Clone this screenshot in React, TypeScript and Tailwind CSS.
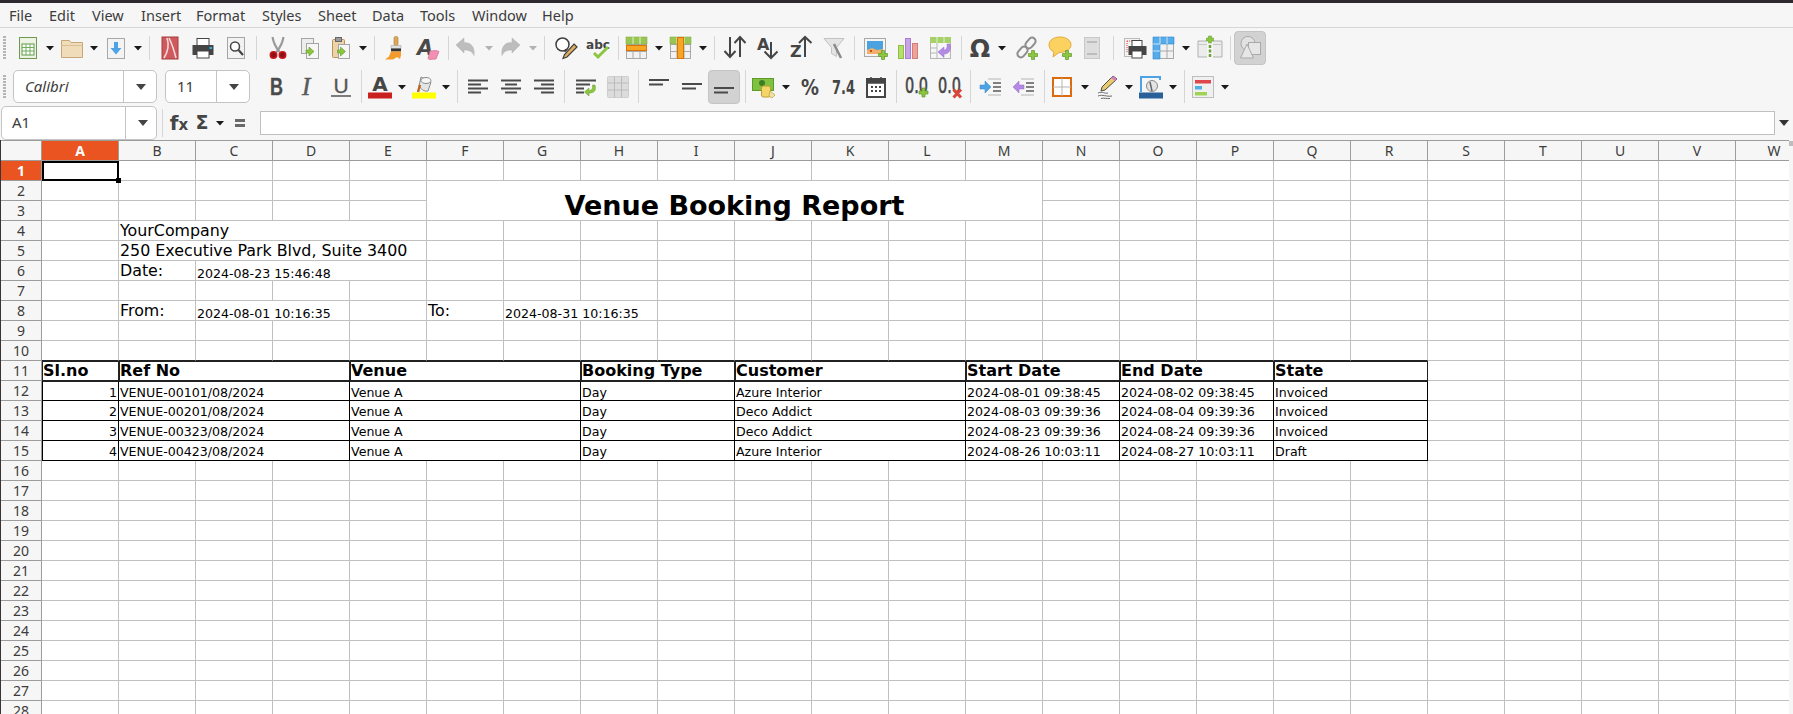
import React from 'react';
import clsx from 'clsx';

type IcoProps = { className?: string };

const Ico: React.FC<IcoProps & { children: React.ReactNode }> = ({ className, children }) => (
  <svg width="24" height="24" viewBox="0 0 24 24" className={clsx('shrink-0 overflow-visible', className)}>{children}</svg>
);

const Arr: React.FC<IcoProps> = ({ className }) => (
  <svg width="8" height="5" viewBox="0 0 8 5" className={clsx('shrink-0 mt-[1px]', className)}><path d="M0 0h8L4 4.5z" fill="#1a1a1a" /></svg>
);

const Sep: React.FC<IcoProps> = ({ className }) => <div className={clsx('w-px shrink-0 bg-[#d6d6d6]', className)} />;

const Grip: React.FC<IcoProps> = ({ className }) => (
  <div className={clsx('ml-[3px] w-[3px] shrink-0 bg-[repeating-linear-gradient(to_bottom,#b5b5b5_0,#b5b5b5_2px,transparent_2px,transparent_3px)]', className)} />
);

const Plus: React.FC<{ x: number; y: number }> = ({ x, y }) => (
  <path transform={`translate(${x} ${y})`} d="M3 0h3v3h3v3H6v3H3V6H0V3h3z" fill="#8cc63f" stroke="#5e9a2a" strokeWidth=".7" />
);

const GreenArrow: React.FC<{ x: number; y: number }> = ({ x, y }) => (
  <path transform={`translate(${x} ${y})`} d="M0 3h3V0l5 4.5L3 9V6H0z" fill="#8cc63f" stroke="#5e9a2a" strokeWidth=".6" />
);

const GridBase: React.FC = () => (
  <>
    <rect x="1.5" y="1.5" width="20" height="21" fill="#f2f2f2" stroke="#a9a9a9" />
    <path d="M8 1.5v21M15 1.5v21M1.5 8.5h20M1.5 15.5h20" stroke="#a9a9a9" fill="none" />
  </>
);

const NewSheet = (p: IcoProps) => (
  <Ico {...p}>
    <rect x="3.5" y="1.5" width="17" height="21" fill="#eef3e6" stroke="#6c9a52" />
    <rect x="6" y="8" width="12" height="11" fill="#fff" stroke="#5c9a46" />
    <path d="M6 11.5h12M6 15h12M10 8v11M14 8v11" stroke="#6fae58" />
  </Ico>
);
const Folder = (p: IcoProps) => (
  <Ico {...p}>
    <path d="M1.5 21.5v-17h8l1.5 2h11.5v15z" fill="#f0dcb8" stroke="#c7a678" />
    <path d="M1.5 9.5h21" stroke="#d9bf94" fill="none" />
  </Ico>
);
const Save = (p: IcoProps) => (
  <Ico {...p}>
    <rect x="3.5" y="2.5" width="17" height="20" fill="#f3f3f3" stroke="#a8a8a8" />
    <path d="M10 6h4v6h3.5L12 18.5 6.5 12H10z" fill="#4da3e4" />
  </Ico>
);
const Pdf = (p: IcoProps) => (
  <Ico {...p}>
    <rect x="4" y="1" width="16" height="22" fill="#cf5a5d" stroke="#a83a3d" />
    <path d="M9 2c2 6 2 12-3 20M11 2c3 6 5 12 7 20" stroke="#f5d9d9" strokeWidth="1.6" fill="none" />
  </Ico>
);
const Printer = (p: IcoProps) => (
  <Ico {...p}>
    <rect x="6" y="2.5" width="12" height="7" fill="#fff" stroke="#444" />
    <path d="M1.5 9h21v10h-21z" fill="#454545" />
    <rect x="6" y="15" width="12" height="7" fill="#fff" stroke="#444" />
    <rect x="18.5" y="11" width="2.5" height="2" fill="#2bb3e8" />
  </Ico>
);
const Preview = (p: IcoProps) => (
  <Ico {...p}>
    <rect x="3.5" y="1.5" width="17" height="21" fill="#f2f2f2" stroke="#a5a5a5" />
    <circle cx="11" cy="10.5" r="4.5" fill="#fff" stroke="#444" strokeWidth="1.5" />
    <path d="M14.5 14l4.5 5" stroke="#444" strokeWidth="2.2" />
  </Ico>
);
const Cut = (p: IcoProps) => (
  <Ico {...p}>
    <path d="M6.500 1c1 6 3 10 7 15M17.500 1c-1 6-3 10-7 15" stroke="#9a9a9a" strokeWidth="2.2" fill="none" />
    <circle cx="7.5" cy="19" r="3.2" fill="#8c1114" stroke="#c8161b" strokeWidth="1.5" />
    <circle cx="16.5" cy="19" r="3.2" fill="#8c1114" stroke="#c8161b" strokeWidth="1.5" />
  </Ico>
);
const Copy = (p: IcoProps) => (
  <Ico {...p}>
    <rect x="3.5" y="2.5" width="12" height="15" fill="#ededed" stroke="#a5a5a5" />
    <rect x="8.5" y="7.5" width="12" height="15" fill="#f6f6f6" stroke="#a5a5a5" />
    <GreenArrow x={8} y={11} />
  </Ico>
);
const Paste = (p: IcoProps) => (
  <Ico {...p}>
    <rect x="3.5" y="3.5" width="12" height="18" rx="1" fill="#ecd3aa" stroke="#b9925c" />
    <rect x="6.5" y="1.5" width="6" height="4" fill="#9a9a9a" stroke="#666" />
    <rect x="9.5" y="8.5" width="11" height="14" fill="#f6f6f6" stroke="#a5a5a5" />
    <GreenArrow x={8.5} y={11} />
  </Ico>
);
const Brush = (p: IcoProps) => (
  <Ico {...p}>
    <rect x="11" y="0.5" width="4" height="9" rx="1.5" fill="#dca75b" stroke="#b27c30" strokeWidth=".6" />
    <path d="M8 9.500h10v3H8z" fill="#dfdfdf" stroke="#999" strokeWidth=".5" />
    <path d="M8 12.500h10v3H8z" fill="#333" />
    <path d="M8 15.500h10v3.500l-1 4-3-2-4 2.500-8 0 4-3z" fill="#f39c2c" />
  </Ico>
);
const ClearFmt = (p: IcoProps) => (
  <Ico {...p}>
    <text x="1" y="19" fontFamily="'DejaVu Sans',sans-serif" fontWeight="700" fontStyle="italic" fontSize="21" fill="#4a4a4a">A</text>
    <path d="M14 15l6-.5 3 1-3 7.500-7 .5-1-1z" fill="#f28fb4" stroke="#d66c95" strokeWidth=".7" />
  </Ico>
);
const Undo = (p: IcoProps) => (
  <Ico {...p}>
    <path d="M2 9l8-7v4.500c7 0 11 4 10 13-1.500-4-5-5.500-10-5.500v3z" fill="#bdbdbd" stroke="#b0b0b0" strokeWidth=".5" />
  </Ico>
);
const Redo = (p: IcoProps) => (
  <Ico {...p}>
    <path d="M22 9l-8-7v4.500c-7 0-11 4-10 13 1.500-4 5-5.500 10-5.500v3z" fill="#bdbdbd" stroke="#b0b0b0" strokeWidth=".5" />
  </Ico>
);
const Find = (p: IcoProps) => (
  <Ico {...p}>
    <circle cx="8.5" cy="8.5" r="6.5" fill="#fff" stroke="#3f3f3f" strokeWidth="1.5" />
    <path d="M12.500 13.500l-2 2" stroke="#3f3f3f" strokeWidth="2" />
    <path d="M20 8l3 3-10 10-4 1.500 1.500-4z" fill="#e0b060" stroke="#3f3f3f" strokeWidth="1.2" />
  </Ico>
);
const Abc = (p: IcoProps) => (
  <Ico {...p}>
    <text x="0" y="13" textLength="24" lengthAdjust="spacingAndGlyphs" fontFamily="'DejaVu Sans',sans-serif" fontWeight="700" fontSize="12.5" fill="#444">abc</text>
    <path d="M8 17l4 4 10-10" stroke="#8cc63f" strokeWidth="3" fill="none" />
  </Ico>
);
const RowIns = (p: IcoProps) => (
  <Ico {...p}>
    <GridBase />
    <rect x="1" y="1" width="21" height="7" fill="#97c653" stroke="#8ab04a" strokeWidth=".6" />
    <path d="M8 1v7M15 1v7" stroke="#e5f0c9" />
    <rect x="1.5" y="9.5" width="20" height="5" fill="#f6a623" stroke="#d8730a" />
  </Ico>
);
const ColIns = (p: IcoProps) => (
  <Ico {...p}>
    <GridBase />
    <rect x="1" y="1" width="21" height="7" fill="#97c653" stroke="#8ab04a" strokeWidth=".6" />
    <path d="M8 1v7M15 1v7" stroke="#e5f0c9" />
    <rect x="8.5" y="1.5" width="6" height="21" fill="#f6a623" stroke="#d8730a" />
  </Ico>
);
const Sort = (p: IcoProps) => (
  <Ico {...p}>
    <path d="M7 1v20M1.500 15L7 21l5.500-6M17 21V1M11.500 7L17 1l5.500 6" stroke="#454545" strokeWidth="2" fill="none" />
  </Ico>
);
const SortAsc = (p: IcoProps) => (
  <Ico {...p}>
    <text x="0" y="14" fontFamily="'DejaVu Sans',sans-serif" fontWeight="700" fontSize="16" fill="#454545">A</text>
    <path d="M14 6v16M7.500 15.500L14 22l6.500-6.500" stroke="#454545" strokeWidth="2" fill="none" />
  </Ico>
);
const SortDesc = (p: IcoProps) => (
  <Ico {...p}>
    <text x="0" y="21" fontFamily="'DejaVu Sans',sans-serif" fontWeight="700" fontSize="16" fill="#454545">Z</text>
    <path d="M15 21V1M9 7l6-6 6.500 6" stroke="#454545" strokeWidth="2" fill="none" />
  </Ico>
);
const Filter = (p: IcoProps) => (
  <Ico {...p}>
    <path d="M2 2.500h20l-7.500 9v9l-5-3v-6z" fill="#e4e4e4" stroke="#c2c2c2" />
    <path d="M12 8l7 14" stroke="#8a8a8a" strokeWidth="2.5" />
  </Ico>
);
const ImageIns = (p: IcoProps) => (
  <Ico {...p}>
    <rect x="0.5" y="2.5" width="21" height="18" fill="#f4f4f4" stroke="#a8a8a8" />
    <rect x="3" y="5" width="16" height="13" fill="#4aa3df" />
    <path d="M3 18v-4l5-2 5 2 6-1v5z" fill="#f0b067" />
    <rect x="6" y="14" width="2" height="2" fill="#d9431e" />
    <Plus x={14.5} y={14.5} />
  </Ico>
);
const Chart = (p: IcoProps) => (
  <Ico {...p}>
    <rect x="2.5" y="9.5" width="5" height="13" fill="#b5e06b" stroke="#8fbf45" />
    <rect x="9.5" y="2.5" width="5" height="20" fill="#c9a2e8" stroke="#a77fcb" />
    <rect x="16.5" y="7.5" width="5" height="15" fill="#f0a29a" stroke="#cf7f77" />
  </Ico>
);
const Pivot = (p: IcoProps) => (
  <Ico {...p}>
    <rect x="1.5" y="1.5" width="20" height="21" fill="#f6f6f6" stroke="#b5b5b5" />
    <rect x="1" y="1" width="21" height="6" fill="#a6d06a" />
    <path d="M8 1v6M15 1v6" stroke="#e5f0c9" />
    <path d="M8 7v16M1.500 12h6M1.500 17h6" stroke="#b5b5b5" />
    <path d="M21 8c1.500 6-1 10-6 10v3.500L9 16l6-5v3c2 0 3.500-2 3-6z" fill="#b48be4" stroke="#9468cd" strokeWidth=".5" />
  </Ico>
);
const Omega = (p: IcoProps) => (
  <Ico {...p}>
    <text x="12" y="21" textAnchor="middle" fontFamily="'DejaVu Sans',sans-serif" fontWeight="700" fontSize="24" fill="#454545">Ω</text>
  </Ico>
);
const LinkIns = (p: IcoProps) => (
  <Ico {...p}>
    <rect x="12" y="1" width="7" height="12" rx="3.5" transform="rotate(40 15.5 7)" fill="none" stroke="#8e8e8e" strokeWidth="2" />
    <rect x="4" y="10" width="7" height="12" rx="3.5" transform="rotate(40 7.5 16)" fill="none" stroke="#8e8e8e" strokeWidth="2" />
    <Plus x={13.5} y={14.5} />
  </Ico>
);
const Comment = (p: IcoProps) => (
  <Ico {...p}>
    <path d="M12 1C5.500 1 1 4.500 1 9c0 3 2.500 6 5 7l-1 5 6-4.500c6 0 12-3 12-7.500S18.500 1 12 1z" fill="#fbd25f" stroke="#e6a93a" />
    <Plus x={14.5} y={14.5} />
  </Ico>
);
const HeaderFooter = (p: IcoProps) => (
  <Ico {...p}>
    <rect x="4.5" y="1.5" width="15" height="21" fill="#dedede" stroke="#c8c8c8" />
    <rect x="7" y="5" width="10" height="2" fill="#bdbdbd" />
    <rect x="7" y="17" width="10" height="2" fill="#bdbdbd" />
  </Ico>
);
const PrintArea = (p: IcoProps) => (
  <Ico {...p}>
    <rect x="1.5" y="2.5" width="15" height="18" fill="#f3f3f3" stroke="#bbb" />
    <path d="M4 5h10M4 5v12" stroke="#d9443d" strokeDasharray="1 1" />
    <rect x="9" y="4.5" width="10" height="6" fill="#fff" stroke="#444" />
    <rect x="5.5" y="10" width="18" height="9" fill="#454545" />
    <rect x="9" y="15" width="10" height="7" fill="#fff" stroke="#444" />
  </Ico>
);
const Freeze = (p: IcoProps) => (
  <Ico {...p}>
    <rect x="1.5" y="1.5" width="20" height="21" fill="#f2f2f2" stroke="#a9a9a9" />
    <path d="M15 8v15M8 15h14" stroke="#a9a9a9" />
    <path d="M1 1h21v7H8v15H1z" fill="#55ace8" stroke="#2f87cc" strokeWidth=".6" />
    <path d="M8 1v7M15 1v7M1 8h7M1 15h7" stroke="#c8e4f8" />
  </Ico>
);
const Split = (p: IcoProps) => (
  <Ico {...p}>
    <path d="M9 5H0v16h9M15 5h9v16h-9" fill="#ececec" stroke="#b0b0b0" />
    <path d="M0 8.500h9M15 8.500h9" stroke="#c9c9c9" />
    <path d="M12 9v13" stroke="#6da33a" strokeWidth="2.5" strokeDasharray="3 1.5" />
    <path d="M10.500 0h3v2h2v3h-2v2h-3V5h-2V2h2z" fill="#8cc63f" stroke="#5e9a2a" strokeWidth=".5" />
  </Ico>
);
const Shapes = (p: IcoProps) => (
  <Ico {...p}>
    <circle cx="10" cy="7.5" r="7" fill="#e2e2e2" stroke="#a9a9a9" />
    <rect x="10.5" y="6.5" width="12" height="12" fill="#e6e6e6" stroke="#a9a9a9" />
    <path d="M9 8l6.500 14h-13z" fill="#e6e6e6" stroke="#a9a9a9" />
  </Ico>
);
const Bold = (p: IcoProps) => (
  <Ico {...p}>
    <text x="6" y="20" textLength="13" lengthAdjust="spacingAndGlyphs" fontFamily="'Liberation Sans',sans-serif" fontWeight="700" fontSize="24" fill="#4a4a4a" stroke="#4a4a4a" strokeWidth=".3">B</text>
  </Ico>
);
const Italic = (p: IcoProps) => (
  <Ico {...p}>
    <text x="6" y="20" fontFamily="'Liberation Serif',serif" fontStyle="italic" fontSize="25" fill="#5a5a5a" stroke="#5a5a5a" strokeWidth=".5">I</text>
  </Ico>
);
const Under = (p: IcoProps) => (
  <Ico {...p}>
    <text x="12" y="18" textAnchor="middle" fontFamily="'Liberation Sans',sans-serif" fontSize="21" fill="#555" stroke="#555" strokeWidth=".3">U</text>
    <rect x="2" y="20" width="20" height="2" fill="#7d7d7d" />
  </Ico>
);
const FontColor = (p: IcoProps) => (
  <Ico {...p}>
    <text x="12" y="16" textAnchor="middle" fontFamily="'DejaVu Sans',sans-serif" fontWeight="700" fontSize="20" fill="#454545">A</text>
    <rect x="0" y="17.5" width="24" height="6" fill="#c9211e" />
  </Ico>
);
const Highlight = (p: IcoProps) => (
  <Ico {...p}>
    <path d="M9 2l10 5-3 9c-4 1-7-2-9-5z" fill="#e5e5e5" stroke="#8a8a8a" />
    <ellipse cx="14" cy="5.5" rx="5" ry="3" fill="#f6f6f6" stroke="#8a8a8a" />
    <path d="M8 10l-2 7" stroke="#b5682a" strokeWidth="2.5" />
    <rect x="0" y="17.5" width="24" height="6" fill="#ffff00" />
  </Ico>
);
const AlignL = (p: IcoProps) => (
  <Ico {...p}>
    <path d="M2 5.500h20M2 9.500h13M2 13.500h20M2 17.500h13" stroke="#4a4a4a" strokeWidth="2" />
  </Ico>
);
const AlignC = (p: IcoProps) => (
  <Ico {...p}>
    <path d="M2 5.500h20M6 9.500h12M2 13.500h20M6 17.500h12" stroke="#4a4a4a" strokeWidth="2" />
  </Ico>
);
const AlignR = (p: IcoProps) => (
  <Ico {...p}>
    <path d="M2 5.500h20M9 9.500h13M2 13.500h20M9 17.500h13" stroke="#4a4a4a" strokeWidth="2" />
  </Ico>
);
const Wrap = (p: IcoProps) => (
  <Ico {...p}>
    <path d="M2 5.500h20M2 9.500h14M2 13.500h8M2 17.500h8" stroke="#4a4a4a" strokeWidth="1.8" />
    <path d="M21 10c1.500 6-1 8-6 8v3l-4.500-4 4.500-4v2.500c3 0 4-2 3.500-5.500z" fill="#8cc63f" stroke="#5e9a2a" strokeWidth=".5" />
  </Ico>
);
const Merge = (p: IcoProps) => (
  <Ico {...p}>
    <rect x="1.5" y="1.5" width="21" height="21" rx="1" fill="#dcdcdc" stroke="#cfcfcf" />
    <path d="M8.500 1.500v21M15.500 1.500v21M1.500 8h21M1.500 15h21" stroke="#bcbcbc" fill="none" />
  </Ico>
);
const VAlign: React.FC<IcoProps & { y: number }> = ({ y, ...p }) => (
  <Ico {...p}>
    <path d={`M2 ${y}h20M2 ${y + 4.5}h14`} stroke="#4a4a4a" strokeWidth="2" />
  </Ico>
);
const Currency = (p: IcoProps) => (
  <Ico {...p}>
    <rect x="0.5" y="3.5" width="21" height="12" fill="#7fc241" stroke="#5e9a2a" />
    <circle cx="10" cy="8" r="3" fill="#3f7d22" />
    <rect x="9.5" y="11" width="9" height="11" rx="2" fill="#f3d568" stroke="#bc9c32" />
    <path d="M18 16l5 4-3 3-3-2z" fill="#f3e2a5" stroke="#bc9c32" strokeWidth=".7" />
  </Ico>
);
const Percent = (p: IcoProps) => (
  <Ico {...p}>
    <text x="3" y="20" textLength="18" lengthAdjust="spacingAndGlyphs" fontFamily="'DejaVu Sans',sans-serif" fontWeight="700" fontSize="22" fill="#454545">%</text>
  </Ico>
);
const NumFmt = (p: IcoProps) => (
  <Ico {...p}>
    <text x="1" y="19" textLength="23" lengthAdjust="spacingAndGlyphs" fontFamily="'DejaVu Sans',sans-serif" fontWeight="700" fontSize="19" fill="#454545">7.4</text>
  </Ico>
);
const DateFmt = (p: IcoProps) => (
  <Ico {...p}>
    <rect x="3" y="4" width="18" height="18" fill="#fff" stroke="#454545" strokeWidth="2" />
    <path d="M3 4h18v4H3zM7 2v3M17 2v3" fill="#454545" stroke="#454545" strokeWidth="1.5" />
    <path d="M7 12h2M11 12h2M15 12h2M7 16h2M11 16h2M15 16h2" stroke="#454545" strokeWidth="2" />
  </Ico>
);
const AddDec = (p: IcoProps) => (
  <Ico {...p}>
    <text x="0" y="17.5" textLength="23" lengthAdjust="spacingAndGlyphs" fontFamily="'DejaVu Sans',sans-serif" fontSize="21" fill="#454545" stroke="#454545" strokeWidth=".6">0.0</text>
    <Plus x={14} y={13} />
  </Ico>
);
const DelDec = (p: IcoProps) => (
  <Ico {...p}>
    <text x="0" y="17.5" textLength="23" lengthAdjust="spacingAndGlyphs" fontFamily="'DejaVu Sans',sans-serif" fontSize="21" fill="#454545" stroke="#454545" strokeWidth=".6">0.0</text>
    <path d="M15.500 14.500l7.500 8M23 14.500l-7.500 8" stroke="#d9443d" strokeWidth="3" />
  </Ico>
);
const Indent = (p: IcoProps) => (
  <Ico {...p}>
    <path d="M9 4h13M9 20h13" stroke="#b5b5b5" strokeWidth="1.2" />
    <path d="M14 8h8M14 12h8M14 16h8" stroke="#5a5a5a" strokeWidth="1.5" />
    <path d="M1 10h5V6l6 6-6 6v-4H1z" fill="#4da3e4" stroke="#2f87cc" strokeWidth=".5" />
  </Ico>
);
const Outdent = (p: IcoProps) => (
  <Ico {...p}>
    <path d="M9 4h13M9 20h13" stroke="#b5b5b5" strokeWidth="1.2" />
    <path d="M14 8h8M14 12h8M14 16h8" stroke="#5a5a5a" strokeWidth="1.5" />
    <path d="M12 10H7V6l-6 6 6 6v-4h5z" fill="#b48be4" stroke="#9468cd" strokeWidth=".5" />
  </Ico>
);
const Borders = (p: IcoProps) => (
  <Ico {...p}>
    <rect x="3" y="3" width="18" height="18" fill="#fff" stroke="#dd6a0c" strokeWidth="2" />
    <path d="M12 3v18M3 12h18" stroke="#b4b4b4" />
  </Ico>
);
const BorderStyle = (p: IcoProps) => (
  <Ico {...p}>
    <path d="M18 1l4 3-12 11-4 1 1-4z" fill="#e9cb6b" stroke="#4a4a4a" />
    <path d="M18 1l4 3-2 2-4-3z" fill="#d27fc1" />
    <path d="M3 18c5-2 6 1 10 0M3 21c5-2 8 1 14 0M6 23.500c4-1 5 .5 9 0" stroke="#6a6a6a" fill="none" />
  </Ico>
);
const BorderColor = (p: IcoProps) => (
  <Ico {...p}>
    <path d="M2 17V2h19v3" fill="none" stroke="#4da3e4" strokeWidth="2" />
    <circle cx="13" cy="11" r="5.5" fill="#e4e4e4" stroke="#8a8a8a" />
    <path d="M11 7l2 9" stroke="#666" strokeWidth="1.5" />
    <rect x="0" y="17.5" width="24" height="6" fill="#2a6099" />
  </Ico>
);
const CondFmt = (p: IcoProps) => (
  <Ico {...p}>
    <rect x="1.5" y="1.5" width="21" height="21" fill="#f0f0f0" stroke="#bdbdbd" />
    <rect x="4" y="5" width="16" height="3.5" fill="#e0474c" />
    <rect x="4" y="11" width="7" height="3.5" fill="#4db1e4" />
    <rect x="4" y="17" width="12" height="3.5" fill="#9fd356" />
  </Ico>
);

const menus: [string, string][] = [
  ['File', 'w-[24px]'], ['Edit', 'w-[27px]'], ['View', 'w-[33px]'], ['Insert', 'w-[39px]'], ['Format', 'w-[50px]'],
  ['Styles', 'w-[40px]'], ['Sheet', 'w-[38px]'], ['Data', 'w-[32px]'], ['Tools', 'w-[36px]'], ['Window', 'w-[54px]'], ['Help', 'w-[30px]'],
];

type CellDef = { span?: number; text?: string; kind?: string };

const spanClass: Record<number, string> = { 1: '', 2: 'col-span-2', 3: 'col-span-3', 4: 'col-span-4' };
const colLetters = 'ABCDEFGHIJKLMNOPQRSTUVW'.split('');

const gray = 'border-r border-b border-[#c0c0c0]';
const thinBlack = 'border-r border-b border-black';

const headerRow: CellDef[] = [
  { text: 'Sl.no' }, { span: 3, text: 'Ref No' }, { span: 3, text: 'Venue' }, { span: 2, text: 'Booking Type' },
  { span: 3, text: 'Customer' }, { span: 2, text: 'Start Date' }, { span: 2, text: 'End Date' }, { span: 2, text: 'State' },
];

const bookings = [
  ['1', 'VENUE-00101/08/2024', 'Azure Interior', '2024-08-01 09:38:45', '2024-08-02 09:38:45', 'Invoiced'],
  ['2', 'VENUE-00201/08/2024', 'Deco Addict', '2024-08-03 09:39:36', '2024-08-04 09:39:36', 'Invoiced'],
  ['3', 'VENUE-00323/08/2024', 'Deco Addict', '2024-08-23 09:39:36', '2024-08-24 09:39:36', 'Invoiced'],
  ['4', 'VENUE-00423/08/2024', 'Azure Interior', '2024-08-26 10:03:11', '2024-08-27 10:03:11', 'Draft'],
];

const rowsByNumber: Record<number, CellDef[]> = {
  4: [{}, { span: 4, text: 'YourCompany', kind: 'label' }],
  5: [{}, { span: 4, text: '250 Executive Park Blvd, Suite 3400', kind: 'label' }],
  6: [{}, { text: 'Date:', kind: 'label' }, { span: 3, text: '2024-08-23 15:46:48', kind: 'small' }],
  8: [{}, { text: 'From:', kind: 'label' }, { span: 2, text: '2024-08-01 10:16:35', kind: 'small' }, {}, { text: 'To:', kind: 'label' }, { span: 2, text: '2024-08-31 10:16:35', kind: 'small' }],
};

const fill = (cells: CellDef[]) => {
  const used = cells.reduce((n, c) => n + (c.span ?? 1), 0);
  return [...cells, ...Array.from({ length: 23 - used }, () => ({} as CellDef))];
};

const RowHead: React.FC<{ n: number }> = ({ n }) => (
  <div className={clsx("flex items-center justify-center border-r border-b border-[#9c9c9c] font-['Noto_Sans',sans-serif] text-[14px] leading-none", n === 1 ? 'bg-[#e95420] text-white font-bold' : 'bg-[#f6f6f6] text-[#3c3c3c]')}>{n}</div>
);

const SheetRow: React.FC<{ n: number; cells: CellDef[] }> = ({ n, cells }) => (
  <>
    <RowHead n={n} />
    {fill(cells).map((c, i) => (
      <div
        key={i}
        className={clsx(
          spanClass[c.span ?? 1],
          gray,
          'overflow-hidden whitespace-nowrap bg-white text-black',
          c.kind === 'label' && 'pl-px text-[15.85px] leading-[19px]',
          c.kind === 'small' && 'pl-px pt-[5px] text-[12.6px] leading-[15px]',
        )}
      >
        {c.text}
      </div>
    ))}
  </>
);

const Sheet: React.FC = () => (
  <div className="grid w-[1812px] grid-cols-[41px_repeat(23,77px)] grid-rows-[21px] auto-rows-[20px] font-['DejaVu_Sans',sans-serif]">
    {/* column letters */}
    <div className="border-t border-r border-b border-[#9c9c9c] bg-[#f6f6f6]" />
    {colLetters.map((l, i) => (
      <div
        key={l}
        className={clsx(
          "flex items-center justify-center border-t border-r border-b border-[#9c9c9c] font-['Noto_Sans',sans-serif] text-[14px] leading-none",
          i === 0 ? 'bg-[#e95420] font-bold text-white' : 'bg-[#f6f6f6] text-[#3c3c3c]',
        )}
      >
        {l}
      </div>
    ))}

    {/* 1 */}
    <RowHead n={1} />
    <div className="relative z-10 border-2 border-black bg-white">
      <div className="absolute -right-[4px] -bottom-[4px] h-[5px] w-[5px] bg-black" />
    </div>
    {Array.from({ length: 22 }, (_, i) => <div key={i} className={gray} />)}

    {/* 2-3 with the merged title */}
    <RowHead n={2} />
    {Array.from({ length: 5 }, (_, i) => <div key={i} className={gray} />)}
    <div className="col-span-8 row-span-2 flex items-center justify-center border-r border-b border-[#c0c0c0] bg-white pt-[9px] text-[27px] leading-none font-bold text-black">
      Venue Booking Report
    </div>
    {Array.from({ length: 10 }, (_, i) => <div key={i} className={gray} />)}
    <RowHead n={3} />
    {Array.from({ length: 5 }, (_, i) => <div key={i} className={gray} />)}
    {Array.from({ length: 10 }, (_, i) => <div key={i} className={gray} />)}

    {[4, 5, 6, 7, 8, 9].map((n) => <SheetRow key={n} n={n} cells={rowsByNumber[n] ?? []} />)}

    {/* 10: dark bottom edge above the table head */}
    <RowHead n={10} />
    {Array.from({ length: 18 }, (_, i) => <div key={i} className="border-r border-b border-r-[#c0c0c0] border-b-[#222]" />)}
    {[1, 2, 3, 4, 5].map((i) => <div key={i} className={gray} />)}

    {/* 11: table head */}
    <RowHead n={11} />
    {headerRow.map((c) => (
      <div key={c.text} className={clsx(spanClass[c.span ?? 1], 'overflow-hidden whitespace-nowrap border border-[#222] text-[16px] leading-[18px] font-bold text-black')}>
        {c.text}
      </div>
    ))}
    {[1, 2, 3, 4, 5].map((i) => <div key={i} className={gray} />)}

    {/* 12-15: bookings */}
    {bookings.map((b, idx) => (
      <React.Fragment key={b[0]}>
        <RowHead n={12 + idx} />
        <div className={clsx(thinBlack, 'border-l pr-px pt-[3px] text-right text-[12.6px] leading-[16px] text-black', idx === 0 && 'border-t border-t-[#222]')}>{b[0]}</div>
        {[
          { span: 3, text: b[1] }, { span: 3, text: 'Venue A' }, { span: 2, text: 'Day' }, { span: 3, text: b[2] },
          { span: 2, text: b[3] }, { span: 2, text: b[4] }, { span: 2, text: b[5] },
        ].map((c) => (
          <div key={c.text + c.span} className={clsx(spanClass[c.span], thinBlack, 'overflow-hidden whitespace-nowrap pl-px pt-[3px] text-[12.6px] leading-[16px] text-black', idx === 0 && 'border-t border-t-[#222]')}>
            {c.text}
          </div>
        ))}
        {[1, 2, 3, 4, 5].map((i) => <div key={i} className={gray} />)}
      </React.Fragment>
    ))}

    {Array.from({ length: 13 }, (_, i) => <SheetRow key={i} n={16 + i} cells={[]} />)}
  </div>
);

const Combo: React.FC<{ className: string; sepClass: string; arrowClass: string; children: React.ReactNode }> = ({ className, sepClass, arrowClass, children }) => (
  <div className={clsx('flex shrink-0 items-center rounded-[5px] border border-[#c4c4c4] bg-white', className)}>
    <div className={clsx('flex h-full items-center border-r border-[#c4c4c4] text-[#3c3c3c]', sepClass)}>{children}</div>
    <svg width="10" height="6" viewBox="0 0 10 6" className={arrowClass}><path d="M0 0h10L5 6z" fill="#444" /></svg>
  </div>
);

export default function App() {
  return (
    <div className="h-[714px] w-[1793px] overflow-hidden bg-[#f6f6f6] font-['Noto_Sans',sans-serif]">
      <div className="h-[3px] bg-[#2c2a2c]" />

      <div className="flex h-[25px] items-center gap-[16px] border-b border-[#d6d6d6] pl-[9px] text-[14.5px] leading-none text-[#3c3c3c]">
        {menus.map(([m, w]) => <div key={m} className={clsx('whitespace-nowrap', w)}>{m}</div>)}
      </div>

      {/* standard toolbar */}
      <div className="flex h-[40px] items-center">
        <Grip className="h-6" />
        <NewSheet className="ml-[10px]" /><Arr className="ml-[6px]" />
        <Folder className="ml-[6px]" /><Arr className="ml-[6px]" />
        <Save className="ml-[6px]" /><Arr className="ml-[6px]" />
        <Sep className="ml-[7px] h-6" />
        <Pdf className="ml-[8px]" /><Printer className="ml-[9px]" /><Preview className="ml-[9px]" />
        <Sep className="ml-[8px] h-6" />
        <Cut className="ml-[9px]" /><Copy className="ml-[8px]" /><Paste className="ml-[7px]" /><Arr className="ml-[6px]" />
        <Sep className="ml-[7px] h-6" />
        <Brush className="ml-[8px]" /><ClearFmt className="ml-[9px]" />
        <Sep className="ml-[8px] h-6" />
        <Undo className="ml-[5px]" /><Arr className="ml-[7px] opacity-30" /><Redo className="ml-[5px]" /><Arr className="ml-[7px] opacity-30" />
        <Sep className="ml-[7px] h-6" />
        <Find className="ml-[9px]" /><Abc className="ml-[8px]" />
        <Sep className="ml-[8px] h-6" />
        <RowIns className="ml-[6px]" /><Arr className="ml-[6px]" /><ColIns className="ml-[6px]" /><Arr className="ml-[6px]" />
        <Sep className="ml-[7px] h-6" />
        <Sort className="ml-[8px]" /><SortAsc className="ml-[10px]" /><SortDesc className="ml-[9px]" /><Filter className="ml-[8px]" />
        <Sep className="ml-[8px] h-6" />
        <ImageIns className="ml-[9px]" /><Chart className="ml-[8px]" /><Pivot className="ml-[9px]" />
        <Sep className="ml-[8px] h-6" />
        <Omega className="ml-[6px]" /><Arr className="ml-[6px]" /><LinkIns className="ml-[9px]" /><Comment className="ml-[9px]" /><HeaderFooter className="ml-[8px]" />
        <Sep className="ml-[9px] h-6" />
        <PrintArea className="ml-[9px]" /><Freeze className="ml-[5px]" /><Arr className="ml-[6px]" /><Split className="ml-[8px]" />
        <Sep className="ml-[8px] h-6" />
        <div className="ml-[3px] flex h-[34px] w-[32px] items-center justify-center rounded-[4px] border border-[#c4c4c4] bg-[#d2d2d2]"><Shapes /></div>
      </div>

      {/* formatting toolbar */}
      <div className="flex h-[37px] items-center">
        <Grip className="h-6" />
        <Combo className="ml-[7px] h-[33px] w-[144px]" sepClass="w-[110px] pl-[11px]" arrowClass="ml-[12px]">
          <span className="text-[15px] italic">Calibri</span>
        </Combo>
        <Combo className="ml-[8px] h-[33px] w-[85px]" sepClass="w-[51px] pl-[11px]" arrowClass="ml-[12px]">
          <span className="text-[15px]">11</span>
        </Combo>
        <Bold className="ml-[14px]" /><Italic className="ml-[8px]" /><Under className="ml-[9px]" />
        <Sep className="ml-[8px] h-[33px]" />
        <FontColor className="ml-[6px]" /><Arr className="ml-[6px]" /><Highlight className="ml-[6px]" /><Arr className="ml-[6px]" />
        <Sep className="ml-[7px] h-[33px]" />
        <AlignL className="ml-[8px]" /><AlignC className="ml-[9px]" /><AlignR className="ml-[9px]" />
        <Sep className="ml-[8px] h-[33px]" />
        <Wrap className="ml-[9px]" /><Merge className="ml-[8px]" />
        <Sep className="ml-[8px] h-[33px]" />
        <VAlign y={5} className="ml-[8px]" /><VAlign y={9} className="ml-[9px]" />
        <div className="ml-[4px] flex h-[34px] w-[32px] items-center justify-center rounded-[4px] border border-[#c4c4c4] bg-[#d2d2d2]"><VAlign y={13} /></div>
        <Sep className="ml-[5px] h-[33px]" />
        <Currency className="ml-[6px]" /><Arr className="ml-[6px]" /><Percent className="ml-[8px]" /><NumFmt className="ml-[9px]" /><DateFmt className="ml-[9px]" />
        <Sep className="ml-[8px] h-[33px]" />
        <AddDec className="ml-[8px]" /><DelDec className="ml-[9px]" />
        <Sep className="ml-[8px] h-[33px]" />
        <Indent className="ml-[8px]" /><Outdent className="ml-[9px]" />
        <Sep className="ml-[8px] h-[33px]" />
        <Borders className="ml-[5px]" /><Arr className="ml-[7px]" /><BorderStyle className="ml-[6px]" /><Arr className="ml-[6px]" /><BorderColor className="ml-[6px]" /><Arr className="ml-[6px]" />
        <Sep className="ml-[7px] h-[33px]" />
        <CondFmt className="ml-[6px]" /><Arr className="ml-[6px]" />
      </div>

      {/* formula bar */}
      <div className="flex h-[35px] items-center">
        <Combo className="ml-px h-[34px] w-[156px]" sepClass="w-[124px] pl-[10px]" arrowClass="ml-[12px]">
          <span className="text-[15px]">A1</span>
        </Combo>
        <Sep className="ml-[5px] h-[28px]" />
        <div className="ml-[5px] flex w-[22px] items-baseline justify-center font-['DejaVu_Sans',sans-serif] text-[20px] leading-none font-bold text-[#454545]">f<span className="text-[15px]">x</span></div>
        <div className="flex w-[24px] justify-center font-['DejaVu_Sans',sans-serif] text-[19px] leading-none font-bold text-[#454545]">Σ</div>
        <Arr className="ml-[2px]" />
        <svg width="24" height="10" viewBox="0 0 24 10" className="ml-[4px] shrink-0"><path d="M7 1h10v3H7zM7 6h10v3H7z" fill="#6a6a6a" /></svg>
        <div className="ml-[8px] h-[24px] w-[1515px] border border-[#c0c0c0] bg-white" />
        <svg width="10" height="6" viewBox="0 0 10 6" className="ml-[4px]"><path d="M0 0h10L5 6z" fill="#333" /></svg>
      </div>

      {/* sheet */}
      <div className="flex h-[574px] border-l border-[#3a3438]">
        <div className="w-[1788px] overflow-hidden bg-white"><Sheet /></div>
        <div className="flex-1 bg-[#f6f6f6]"><div className="mt-px h-[5px] bg-[#bdbdbd]" /></div>
      </div>
    </div>
  );
}
